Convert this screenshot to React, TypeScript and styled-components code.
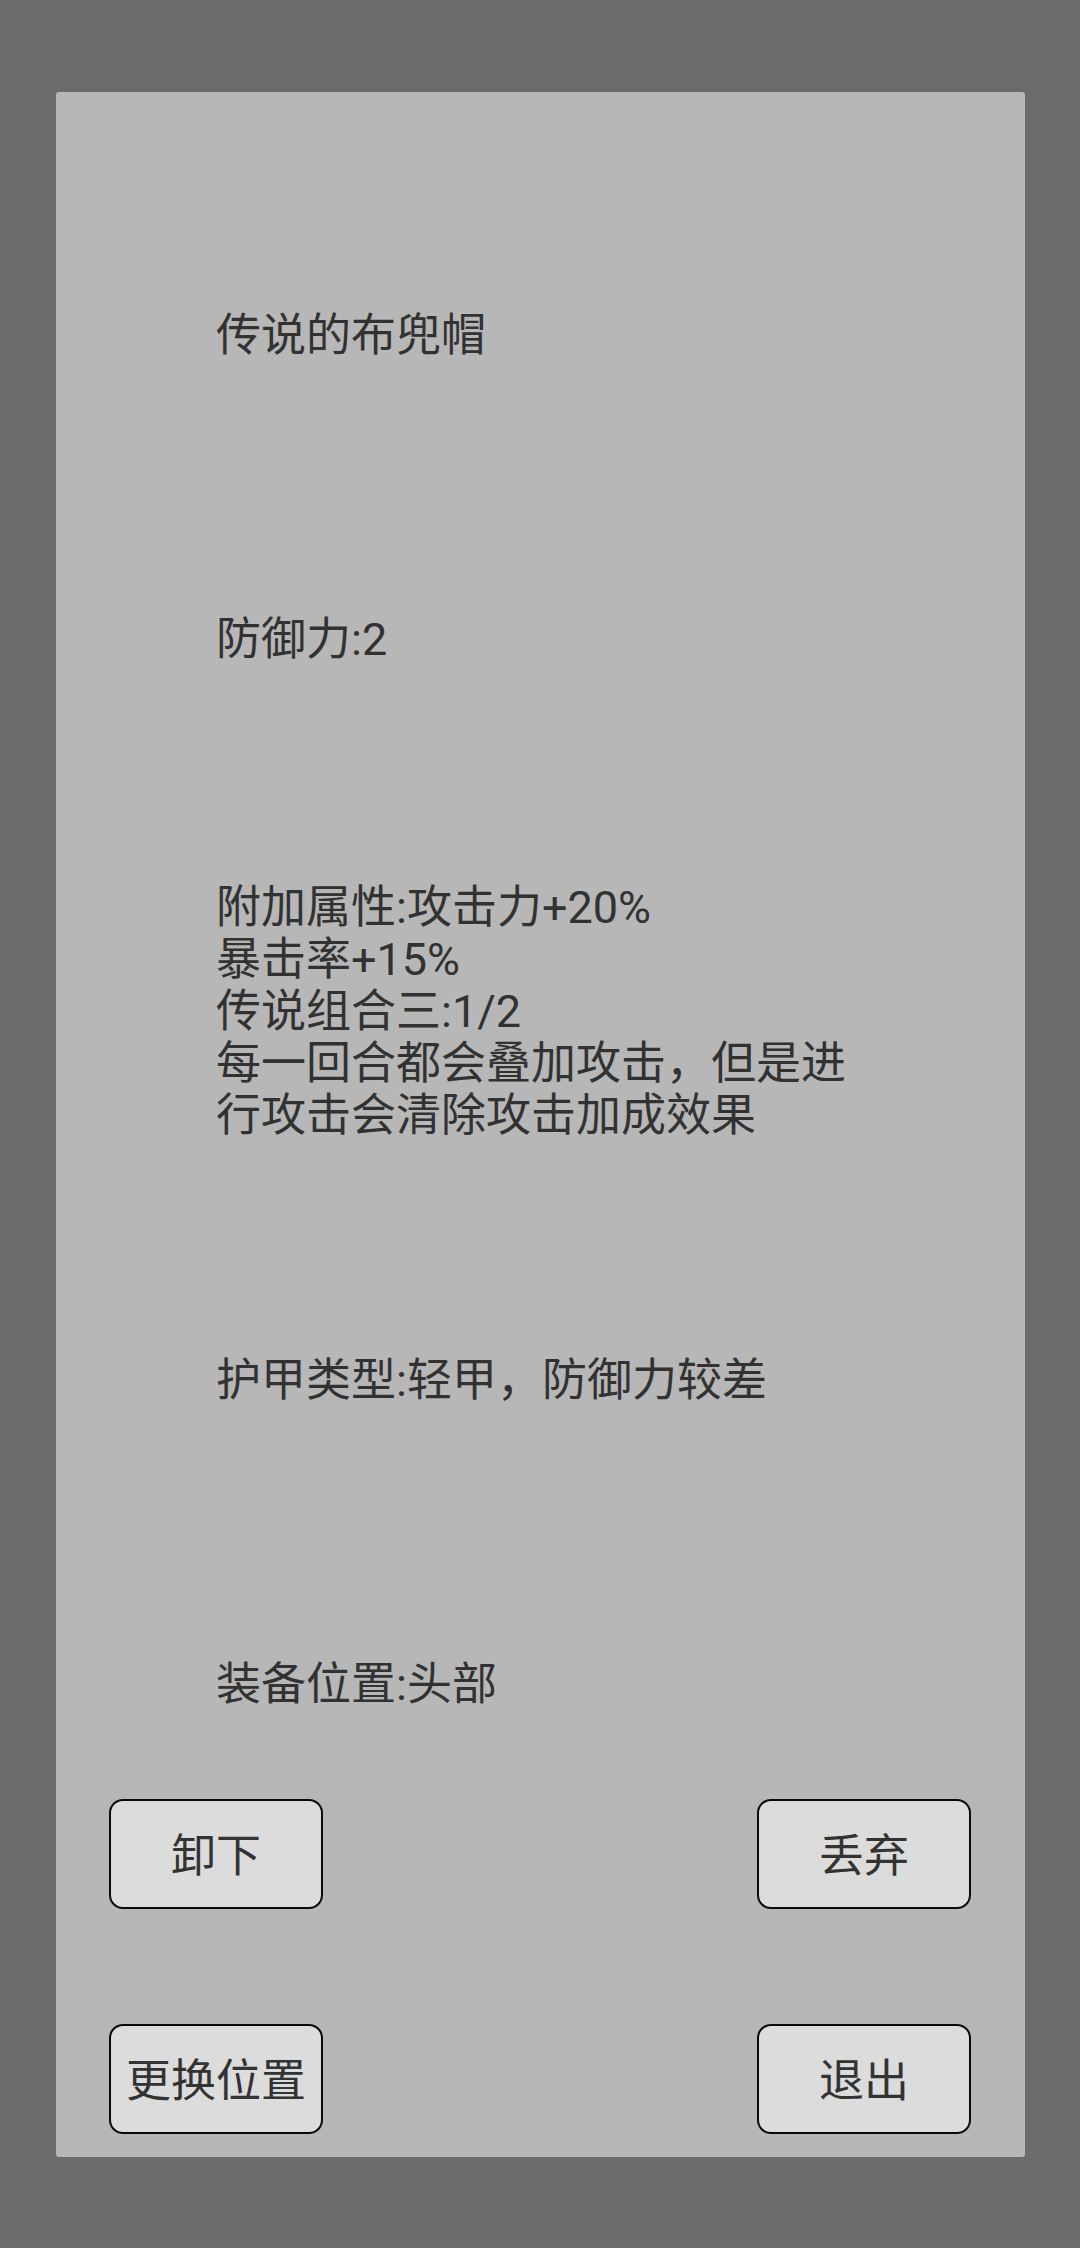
import styled, { createGlobalStyle } from "styled-components";

const GlobalStyle = createGlobalStyle`
  html, body {
    margin: 0;
    padding: 0;
    background: #6b6b6b;
  }
  body {
    font-family: Roboto, "Noto Sans CJK SC", sans-serif;
  }
`;

const Screen = styled.div`
  width: 1080px;
  height: 2248px;
  padding-top: 92px;
  box-sizing: border-box;
  background: #6b6b6b;
`;

const Panel = styled.div`
  margin-left: 56px;
  width: 969px;
  height: 2065px;
  box-sizing: border-box;
  padding: 218px 54px 0 53px;
  background: #b7b7b7;
  border-radius: 3px;
  display: flex;
  flex-direction: column;
`;

const Field = styled.div<{ $top: number }>`
  margin-top: ${(p) => p.$top}px;
  margin-left: 107px;
  width: 650px;
  font-size: 45px;
  line-height: 52px;
  color: #323232;
  white-space: pre-line;
`;

const ButtonRow = styled.div<{ $top: number }>`
  margin-top: ${(p) => p.$top}px;
  display: flex;
  justify-content: space-between;
`;

const ActionButton = styled.button`
  width: 214px;
  height: 110px;
  box-sizing: border-box;
  border: 2px solid #0a0a0a;
  border-radius: 14px;
  background: #dcdcdc;
  color: #333333;
  font-family: Roboto, "Noto Sans CJK SC", sans-serif;
  font-size: 45px;
  padding: 0 0 3px;
  display: flex;
  align-items: center;
  justify-content: center;
  cursor: pointer;
`;

export default function App() {
  return (
    <>
      <GlobalStyle />
      <Screen>
        <Panel>
          <Field $top={0}>传说的布兜帽</Field>
          <Field $top={252}>防御力:2</Field>
          <Field $top={216}>
            {"附加属性:攻击力+20%\n暴击率+15%\n传说组合三:1/2\n每一回合都会叠加攻击，但是进行攻击会清除攻击加成效果"}
          </Field>
          <Field $top={213}>护甲类型:轻甲，防御力较差</Field>
          <Field $top={252}>装备位置:头部</Field>
          <ButtonRow $top={88}>
            <ActionButton>卸下</ActionButton>
            <ActionButton>丢弃</ActionButton>
          </ButtonRow>
          <ButtonRow $top={115}>
            <ActionButton>更换位置</ActionButton>
            <ActionButton>退出</ActionButton>
          </ButtonRow>
        </Panel>
      </Screen>
    </>
  );
}
